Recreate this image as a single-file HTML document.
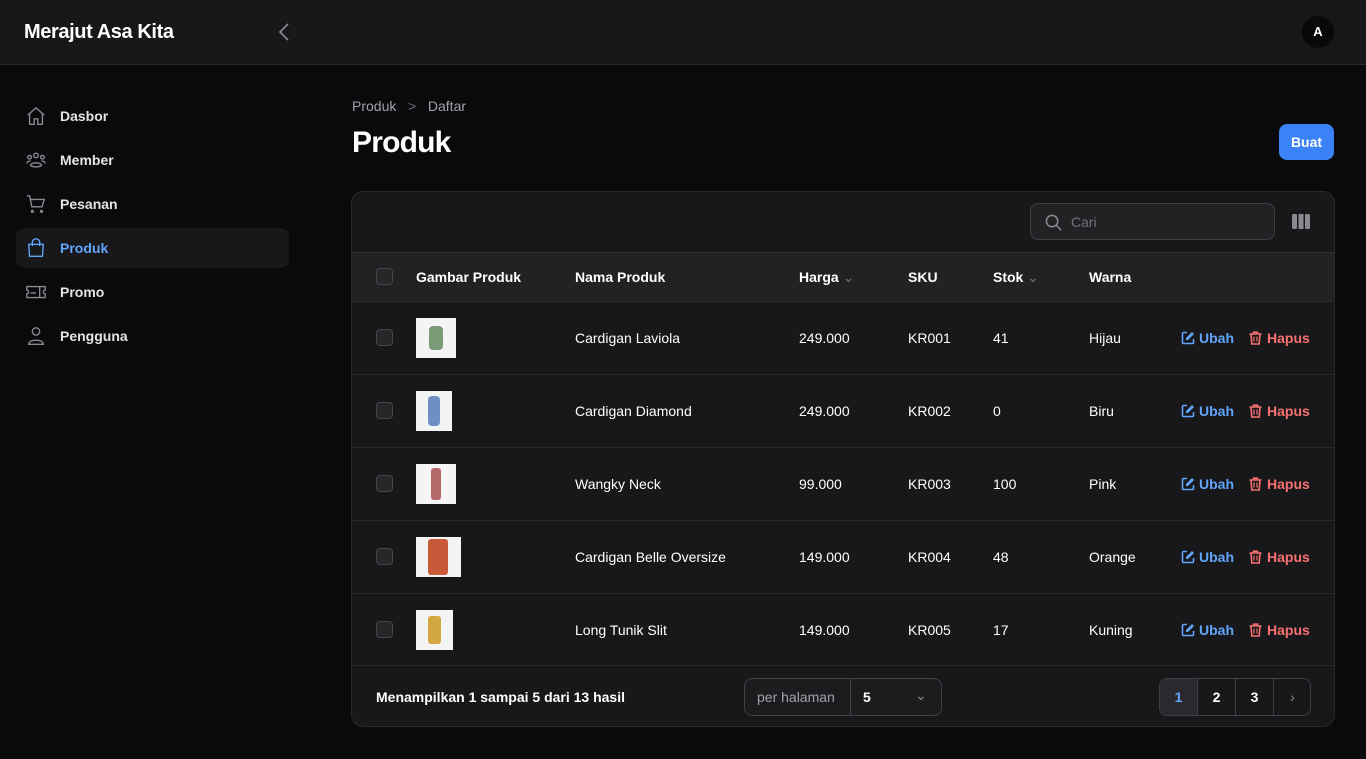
<!DOCTYPE html>
<html><head><meta charset="utf-8"><style>
*{box-sizing:border-box;margin:0;padding:0}
body{width:1366px;height:759px;background:#0a0a0c;font-family:"Liberation Sans",sans-serif;color:#fff;position:relative;overflow:hidden;font-size:14px}
.top{position:absolute;left:0;top:0;width:1366px;height:65px;background:#18181b;border-bottom:1px solid #2a2a2e}
.logo{position:absolute;left:24px;top:21px;font-size:20px;font-weight:bold;letter-spacing:-0.4px}
.av{position:absolute;left:1302px;top:16px;width:32px;height:32px;border-radius:50%;background:#09090b;font-size:13px;font-weight:bold;text-align:center;line-height:32px}
.nav{position:absolute;left:16px;width:273px;height:40px;border-radius:8px;font-weight:bold;color:#e4e4e7;font-size:14px}
.nav span{position:absolute;left:44px;top:12px}
.nav svg{position:absolute;left:9px;top:9px}
.act{background:#18181b;color:#60a5fa}
.abs{position:absolute}
.card{position:absolute;left:351px;top:191px;width:984px;height:536px;background:#18181b;border:1px solid #2a2a2e;border-radius:12px;overflow:hidden}
.hdr{position:absolute;left:0;top:60px;width:984px;height:50px;background:#222225;border-top:1px solid #2e2e32;border-bottom:1px solid #2e2e32}
.cb{position:absolute;width:17px;height:17px;border:1px solid #45454b;border-radius:4px;background:#27272a}
.th{position:absolute;font-weight:bold;font-size:14px}
.row{position:absolute;left:0;width:984px;height:73px;border-bottom:1px solid #2a2a2e}
.row .t{position:absolute;top:28px;font-size:14px}
.img{position:absolute;left:64px;top:16px;height:40px;background:#f4f4f4}
.u{color:#60a5fa;font-weight:bold}.h{color:#f87171;font-weight:bold}
.ic{position:absolute;top:29px}
</style></head><body>
<div class="top">
<div class="logo">Merajut Asa Kita</div>
<svg class="abs" style="left:276px;top:23px" width="16" height="18" viewBox="0 0 16 18"><path d="M12 1L4 9l8 8" stroke="#8a8a90" stroke-width="1.6" fill="none"/></svg>
<div class="av">A</div>
</div>
<div class="nav" style="top:96px"><svg width="22" height="22" viewBox="0 0 24 24" fill="none" stroke="#8a8a90" stroke-width="1.5"><path d="M3 11l9-8 9 8M5 9.5V21h5v-6h4v6h5V9.5"/></svg><span>Dasbor</span></div>
<div class="nav" style="top:140px"><svg width="22" height="22" viewBox="0 0 24 24" fill="none" stroke="#8a8a90" stroke-width="1.5"><circle cx="12" cy="7" r="2.5"/><circle cx="5" cy="9" r="2"/><circle cx="19" cy="9" r="2"/><path d="M6 18c1-4 11-4 12 0-3 2-9 2-12 0zM2 16c0-2 2-3 4-3M22 16c0-2-2-3-4-3"/></svg><span>Member</span></div>
<div class="nav" style="top:184px"><svg width="22" height="22" viewBox="0 0 24 24" fill="none" stroke="#8a8a90" stroke-width="1.5"><path d="M2 3h3l2.5 12h11L21 7H6"/><circle cx="8" cy="20" r="1"/><circle cx="18" cy="20" r="1"/></svg><span>Pesanan</span></div>
<div class="nav act" style="top:228px"><svg width="22" height="22" viewBox="0 0 24 24" fill="none" stroke="#60a5fa" stroke-width="1.5"><path d="M4 8h16l-1 13H5zM8 10V6a4 4 0 018 0v4"/></svg><span>Produk</span></div>
<div class="nav" style="top:272px"><svg width="22" height="22" viewBox="0 0 24 24" fill="none" stroke="#8a8a90" stroke-width="1.5"><path d="M2 6h20v4a2 2 0 000 4v4H2v-4a2 2 0 000-4zM16 6v12M6 13h6"/></svg><span>Promo</span></div>
<div class="nav" style="top:316px"><svg width="22" height="22" viewBox="0 0 24 24" fill="none" stroke="#8a8a90" stroke-width="1.5"><circle cx="12" cy="7" r="4"/><path d="M4 21c0-6 16-6 16 0z"/></svg><span>Pengguna</span></div>

<div class="abs" style="left:352px;top:98px;color:#a1a1aa;font-size:14px">Produk &nbsp;&nbsp;<span style="color:#71717a">&gt;</span>&nbsp;&nbsp; Daftar</div>
<div class="abs" style="left:352px;top:126px;font-size:30px;font-weight:bold;letter-spacing:-0.8px">Produk</div>
<div class="abs" style="left:1279px;top:124px;width:55px;height:36px;background:#3b82f6;border-radius:8px;font-weight:bold;font-size:14px;text-align:center;line-height:36px">Buat</div>

<div class="card">
<div class="abs" style="left:678px;top:11px;width:245px;height:37px;border:1px solid #3f3f46;border-radius:8px;background:#222225"><svg class="abs" style="left:13px;top:9px" width="19" height="19" viewBox="0 0 20 20" fill="none" stroke="#8a8a90" stroke-width="1.6"><circle cx="8.5" cy="8.5" r="6"/><path d="M13 13l5 5"/></svg><span class="abs" style="left:40px;top:10px;color:#71717a">Cari</span></div>
<svg class="abs" style="left:940px;top:22px" width="18" height="15" viewBox="0 0 18 15"><rect x="0" y="0" width="5" height="15" rx="1.5" fill="#8a8a90"/><rect x="6.5" y="0" width="5" height="15" fill="#8a8a90"/><rect x="13" y="0" width="5" height="15" rx="1.5" fill="#8a8a90"/></svg>
<div class="hdr">
<div class="cb" style="left:24px;top:15px"></div>
<div class="th" style="left:64px;top:16px">Gambar Produk</div>
<div class="th" style="left:223px;top:16px">Nama Produk</div>
<div class="th" style="left:447px;top:16px">Harga <span style="color:#71717a;font-weight:normal">&#8964;</span></div>
<div class="th" style="left:556px;top:16px">SKU</div>
<div class="th" style="left:641px;top:16px">Stok <span style="color:#71717a;font-weight:normal">&#8964;</span></div>
<div class="th" style="left:737px;top:16px">Warna</div>
</div>

<div class="row" style="top:110px"><div class="cb" style="left:24px;top:27px"></div><div class="img" style="width:40px"><div class="abs" style="left:13px;top:8px;width:14px;height:24px;background:#7a9a78;border-radius:4px"></div></div><span class="t" style="left:223px">Cardigan Laviola</span><span class="t" style="left:447px">249.000</span><span class="t" style="left:556px">KR001</span><span class="t" style="left:641px">41</span><span class="t" style="left:737px">Hijau</span>
<svg class="ic" style="left:829px" width="14" height="14" viewBox="0 0 14 14"><path d="M6 1.5H2.5a1 1 0 00-1 1v9a1 1 0 001 1h9a1 1 0 001-1V8" stroke="#60a5fa" stroke-width="1.6" fill="none"/><path d="M11 1l2 2-6 6H5V7z" fill="#60a5fa"/></svg><span class="t u" style="left:847px">Ubah</span>
<svg class="ic" style="left:897px" width="13" height="14" viewBox="0 0 13 14"><path d="M0.5 3h12M4.5 3V1.2h4V3M2 3l.8 10h7.4L11 3" stroke="#f87171" stroke-width="1.6" fill="none"/><path d="M5 5.5v5M8 5.5v5" stroke="#f87171" stroke-width="1.2"/></svg><span class="t h" style="left:915px">Hapus</span></div>

<div class="row" style="top:183px"><div class="cb" style="left:24px;top:27px"></div><div class="img" style="width:36px"><div class="abs" style="left:12px;top:5px;width:12px;height:30px;background:#6d8fc4;border-radius:4px"></div></div><span class="t" style="left:223px">Cardigan Diamond</span><span class="t" style="left:447px">249.000</span><span class="t" style="left:556px">KR002</span><span class="t" style="left:641px">0</span><span class="t" style="left:737px">Biru</span>
<svg class="ic" style="left:829px" width="14" height="14" viewBox="0 0 14 14"><path d="M6 1.5H2.5a1 1 0 00-1 1v9a1 1 0 001 1h9a1 1 0 001-1V8" stroke="#60a5fa" stroke-width="1.6" fill="none"/><path d="M11 1l2 2-6 6H5V7z" fill="#60a5fa"/></svg><span class="t u" style="left:847px">Ubah</span>
<svg class="ic" style="left:897px" width="13" height="14" viewBox="0 0 13 14"><path d="M0.5 3h12M4.5 3V1.2h4V3M2 3l.8 10h7.4L11 3" stroke="#f87171" stroke-width="1.6" fill="none"/><path d="M5 5.5v5M8 5.5v5" stroke="#f87171" stroke-width="1.2"/></svg><span class="t h" style="left:915px">Hapus</span></div>

<div class="row" style="top:256px"><div class="cb" style="left:24px;top:27px"></div><div class="img" style="width:40px"><div class="abs" style="left:15px;top:4px;width:10px;height:32px;background:#b46a6a;border-radius:3px"></div></div><span class="t" style="left:223px">Wangky Neck</span><span class="t" style="left:447px">99.000</span><span class="t" style="left:556px">KR003</span><span class="t" style="left:641px">100</span><span class="t" style="left:737px">Pink</span>
<svg class="ic" style="left:829px" width="14" height="14" viewBox="0 0 14 14"><path d="M6 1.5H2.5a1 1 0 00-1 1v9a1 1 0 001 1h9a1 1 0 001-1V8" stroke="#60a5fa" stroke-width="1.6" fill="none"/><path d="M11 1l2 2-6 6H5V7z" fill="#60a5fa"/></svg><span class="t u" style="left:847px">Ubah</span>
<svg class="ic" style="left:897px" width="13" height="14" viewBox="0 0 13 14"><path d="M0.5 3h12M4.5 3V1.2h4V3M2 3l.8 10h7.4L11 3" stroke="#f87171" stroke-width="1.6" fill="none"/><path d="M5 5.5v5M8 5.5v5" stroke="#f87171" stroke-width="1.2"/></svg><span class="t h" style="left:915px">Hapus</span></div>

<div class="row" style="top:329px"><div class="cb" style="left:24px;top:27px"></div><div class="img" style="width:45px"><div class="abs" style="left:12px;top:2px;width:20px;height:36px;background:#c85a3a;border-radius:3px"></div></div><span class="t" style="left:223px">Cardigan Belle Oversize</span><span class="t" style="left:447px">149.000</span><span class="t" style="left:556px">KR004</span><span class="t" style="left:641px">48</span><span class="t" style="left:737px">Orange</span>
<svg class="ic" style="left:829px" width="14" height="14" viewBox="0 0 14 14"><path d="M6 1.5H2.5a1 1 0 00-1 1v9a1 1 0 001 1h9a1 1 0 001-1V8" stroke="#60a5fa" stroke-width="1.6" fill="none"/><path d="M11 1l2 2-6 6H5V7z" fill="#60a5fa"/></svg><span class="t u" style="left:847px">Ubah</span>
<svg class="ic" style="left:897px" width="13" height="14" viewBox="0 0 13 14"><path d="M0.5 3h12M4.5 3V1.2h4V3M2 3l.8 10h7.4L11 3" stroke="#f87171" stroke-width="1.6" fill="none"/><path d="M5 5.5v5M8 5.5v5" stroke="#f87171" stroke-width="1.2"/></svg><span class="t h" style="left:915px">Hapus</span></div>

<div class="row" style="top:402px;height:72px"><div class="cb" style="left:24px;top:27px"></div><div class="img" style="width:37px"><div class="abs" style="left:12px;top:6px;width:13px;height:28px;background:#d4a840;border-radius:3px"></div></div><span class="t" style="left:223px">Long Tunik Slit</span><span class="t" style="left:447px">149.000</span><span class="t" style="left:556px">KR005</span><span class="t" style="left:641px">17</span><span class="t" style="left:737px">Kuning</span>
<svg class="ic" style="left:829px" width="14" height="14" viewBox="0 0 14 14"><path d="M6 1.5H2.5a1 1 0 00-1 1v9a1 1 0 001 1h9a1 1 0 001-1V8" stroke="#60a5fa" stroke-width="1.6" fill="none"/><path d="M11 1l2 2-6 6H5V7z" fill="#60a5fa"/></svg><span class="t u" style="left:847px">Ubah</span>
<svg class="ic" style="left:897px" width="13" height="14" viewBox="0 0 13 14"><path d="M0.5 3h12M4.5 3V1.2h4V3M2 3l.8 10h7.4L11 3" stroke="#f87171" stroke-width="1.6" fill="none"/><path d="M5 5.5v5M8 5.5v5" stroke="#f87171" stroke-width="1.2"/></svg><span class="t h" style="left:915px">Hapus</span></div>

<div class="abs" style="left:24px;top:497px;font-weight:bold;font-size:14px">Menampilkan 1 sampai 5 dari 13 hasil</div>
<div class="abs" style="left:392px;top:486px;width:198px;height:38px;border:1px solid #3f3f46;border-radius:8px;background:#1c1c1f"><span class="abs" style="left:12px;top:10px;color:#a1a1aa">per halaman</span><div class="abs" style="left:105px;top:0;width:1px;height:36px;background:#3f3f46"></div><span class="abs" style="left:118px;top:10px;font-weight:bold">5</span><span class="abs" style="left:170px;top:8px;color:#8a8a90">&#8964;</span></div>
<div class="abs" style="left:807px;top:486px;width:152px;height:38px;border:1px solid #3f3f46;border-radius:8px;overflow:hidden;font-weight:bold">
<div class="abs" style="left:0;top:0;width:37px;height:36px;background:#2a2a2e;color:#60a5fa;text-align:center;line-height:36px">1</div>
<div class="abs" style="left:37px;top:0;width:38px;height:36px;border-left:1px solid #3f3f46;text-align:center;line-height:36px">2</div>
<div class="abs" style="left:75px;top:0;width:38px;height:36px;border-left:1px solid #3f3f46;text-align:center;line-height:36px">3</div>
<div class="abs" style="left:113px;top:0;width:38px;height:36px;border-left:1px solid #3f3f46;text-align:center;line-height:36px;color:#8a8a90;font-weight:normal">&#8250;</div>
</div>
</div>
</body></html>
